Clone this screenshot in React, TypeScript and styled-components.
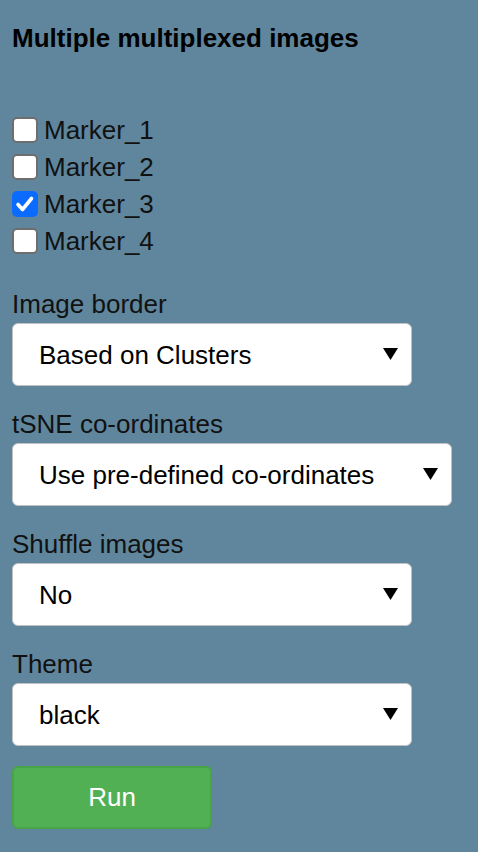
import React, { useState } from "react";
import styled, { createGlobalStyle } from "styled-components";

const GlobalStyle = createGlobalStyle`
  html, body {
    margin: 0;
    padding: 0;
    background: #5f869d;
  }
  body {
    font-family: "Liberation Sans", Arial, Helvetica, sans-serif;
    color: #111;
  }
`;

const Panel = styled.div`
  padding: 23px 12px 20px 12px;
  min-height: 852px;
  box-sizing: border-box;
`;

const Title = styled.h4`
  margin: 0;
  font-size: 26px;
  line-height: 30px;
  font-weight: bold;
  color: #000;
`;

const CheckList = styled.div`
  display: flex;
  flex-direction: column;
  margin-top: 58.5px;
`;

const CheckRow = styled.label`
  display: flex;
  align-items: center;
  height: 37px;
  font-size: 26px;
  line-height: 37px;
  cursor: pointer;
`;

const HiddenInput = styled.input`
  display: none;
`;

const Box = styled.span<{ $checked: boolean }>`
  display: flex;
  align-items: center;
  justify-content: center;
  width: 26px;
  height: 26px;
  box-sizing: border-box;
  border-radius: 5px;
  border: ${(p) => (p.$checked ? "none" : "2px solid #6e6e6e")};
  background: ${(p) => (p.$checked ? "#0b6bff" : "#fff")};
  margin-right: 6px;
`;

const Field = styled.div`
  margin-top: 29.5px;
  & + & {
    margin-top: 23px;
  }
`;

const Label = styled.div`
  font-size: 26px;
  line-height: 30px;
  margin-bottom: 4px;
`;

const SelectWrap = styled.div<{ $width: number }>`
  position: relative;
  width: ${(p) => p.$width}px;
  height: 63px;
`;

const Select = styled.select`
  appearance: none;
  -webkit-appearance: none;
  width: 100%;
  height: 100%;
  box-sizing: border-box;
  border: 1px solid #c2c2c2;
  border-radius: 6px;
  background: #fff;
  color: #000;
  font-family: "Liberation Sans", Arial, Helvetica, sans-serif;
  font-size: 26px;
  padding: 0 40px 0 26px;
  outline: none;
`;

const Arrow = styled.svg`
  position: absolute;
  right: 14px;
  top: 25px;
  width: 15px;
  height: 12px;
  pointer-events: none;
`;

const RunButton = styled.button`
  margin-top: 20px;
  width: 200px;
  height: 63px;
  box-sizing: border-box;
  background: #51b053;
  border: 2px solid #45a547;
  border-radius: 6px;
  color: #fff;
  font-family: "Liberation Sans", Arial, Helvetica, sans-serif;
  font-size: 26px;
  cursor: pointer;
`;

const markers = ["Marker_1", "Marker_2", "Marker_3", "Marker_4"];

const fields = [
  { label: "Image border", value: "Based on Clusters", width: 400 },
  { label: "tSNE co-ordinates", value: "Use pre-defined co-ordinates", width: 440 },
  { label: "Shuffle images", value: "No", width: 400 },
  { label: "Theme", value: "black", width: 400 },
];

const App: React.FC = () => {
  const [checked, setChecked] = useState<Record<string, boolean>>({ Marker_3: true });

  return (
    <Panel>
      <GlobalStyle />
      <Title>Multiple multiplexed images</Title>
      <CheckList>
        {markers.map((m) => (
          <CheckRow key={m}>
            <HiddenInput
              type="checkbox"
              checked={!!checked[m]}
              onChange={() => setChecked({ ...checked, [m]: !checked[m] })}
            />
            <Box $checked={!!checked[m]}>
              {checked[m] && (
                <svg width="26" height="26" viewBox="0 0 26 26">
                  <path
                    d="M6 13.5 L10.5 18.5 L19.5 7.5"
                    fill="none"
                    stroke="#fff"
                    strokeWidth="3.6"
                    strokeLinecap="round"
                    strokeLinejoin="round"
                  />
                </svg>
              )}
            </Box>
            {m}
          </CheckRow>
        ))}
      </CheckList>
      {fields.map((f) => (
        <Field key={f.label}>
          <Label>{f.label}</Label>
          <SelectWrap $width={f.width}>
            <Select defaultValue={f.value}>
              <option>{f.value}</option>
            </Select>
            <Arrow viewBox="0 0 15 12">
              <polygon points="0,0 15,0 7.5,12" fill="#000" />
            </Arrow>
          </SelectWrap>
        </Field>
      ))}
      <RunButton>Run</RunButton>
    </Panel>
  );
};

export default App;
